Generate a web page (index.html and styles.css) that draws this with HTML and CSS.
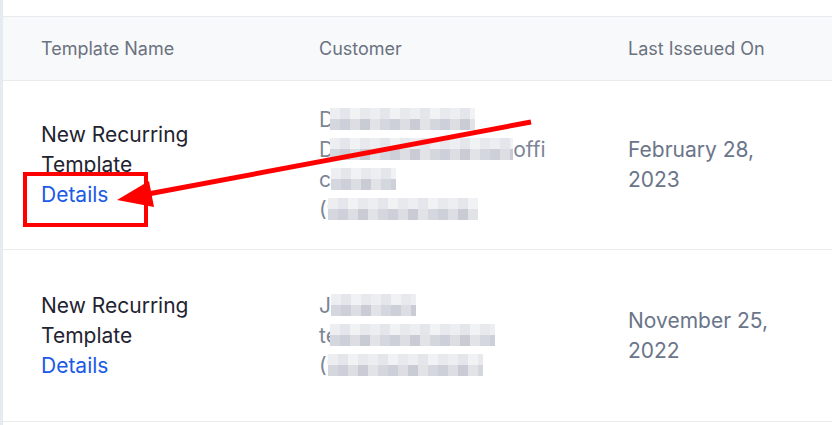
FILE: index.html
```html
<!DOCTYPE html>
<html>
<head>
<meta charset="utf-8">
<link rel="stylesheet" href="styles.css">
</head>
<body>
<div class="edge"></div>
<div class="main">
  <div class="table">
    <div class="row head">
      <div class="cell first">Template Name</div>
      <div class="cell">Customer</div>
      <div class="cell">Last Isseued On</div>
    </div>
    <div class="row body r1">
      <div class="cell first name">New Recurring<br>Template<br><a class="link" href="#">Details</a></div>
      <div class="cell cust">
        <div>D<span class="blur w145 o4"></span></div>
        <div>D<span class="blur w183 o4"></span>offi</div>
        <div>c<span class="blur w65"></span></div>
        <div>(9<span class="blur w150 off"></span></div>
      </div>
      <div class="cell date">February 28,<br>2023</div>
    </div>
    <div class="row body r2">
      <div class="cell first name">New Recurring<br>Template<br><a class="link" href="#">Details</a></div>
      <div class="cell cust">
        <div>J<span class="blur w85"></span></div>
        <div>te<span class="blur w165 off2"></span></div>
        <div>(9<span class="blur w155 off"></span></div>
      </div>
      <div class="cell date">November 25,<br>2022</div>
    </div>
  </div>
</div>
<svg class="annot" width="832" height="425" viewBox="0 0 832 425">
  <rect x="25" y="174" width="121" height="51" fill="none" stroke="#ff0000" stroke-width="4"/>
  <line x1="531" y1="122" x2="148" y2="194" stroke="#ff0000" stroke-width="5"/>
  <polygon points="117,200 149,181 154,207" fill="#ff0000"/>
</svg>
</body>
</html>
```
FILE: styles.css
```css
html, body { margin: 0; padding: 0; }
body {
  width: 832px;
  height: 425px;
  overflow: hidden;
  display: flex;
  background: #ffffff;
  font-family: Inter, "Noto Sans", sans-serif;
  position: relative;
}
.edge {
  width: 3px;
  flex: none;
  background: #e6ebf1;
}
.main {
  flex: 1;
  padding-top: 16px;
}
.table {
  border-top: 1px solid #e8eaee;
}
.row {
  display: grid;
  grid-template-columns: 292px 309px 1fr;
  align-items: center;
  border-bottom: 1px solid #e8eaee;
}
.cell { padding-left: 24px; white-space: nowrap; }
.cell.first { padding-left: 38px; }
.head {
  height: 63px;
  background: #f8f9fb;
  font-size: 18px;
  color: #6b7280;
}
.body {
  font-size: 21px;
  line-height: 30px;
}
.r1 { height: 168px; }
.r2 { height: 171px; }
.name { color: #1f2430; }
.link { color: #1a5ae8; text-decoration: none; }
.cust { color: #7b8596; }
.date { color: #6b7589; }
.blur {
  display: inline-block;
  vertical-align: middle;
  height: 22px;
  margin-top: -4px;
  background:
    repeating-linear-gradient(90deg, #eceef2 0 10px, #e4e6eb 10px 20px, #f1f2f4 20px 30px, #e7e9ed 30px 40px) top / 100% 11px no-repeat,
    repeating-linear-gradient(90deg, #d4d7de 0 10px, #cdd0d8 10px 20px, #dcdee3 20px 30px, #c9ccd4 30px 40px, #e1e3e7 40px 50px) bottom / 100% 11px no-repeat;
}
.o4 { margin-left: -4px; }
.off { margin-left: -12px; }
.off2 { margin-left: -8px; }
.w145 { width: 145px; }
.w183 { width: 183px; }
.w65 { width: 65px; }
.w150 { width: 150px; }
.w85 { width: 85px; }
.w165 { width: 165px; }
.w155 { width: 155px; }
.annot {
  position: absolute;
  left: 0;
  top: 0;
  pointer-events: none;
}
```
